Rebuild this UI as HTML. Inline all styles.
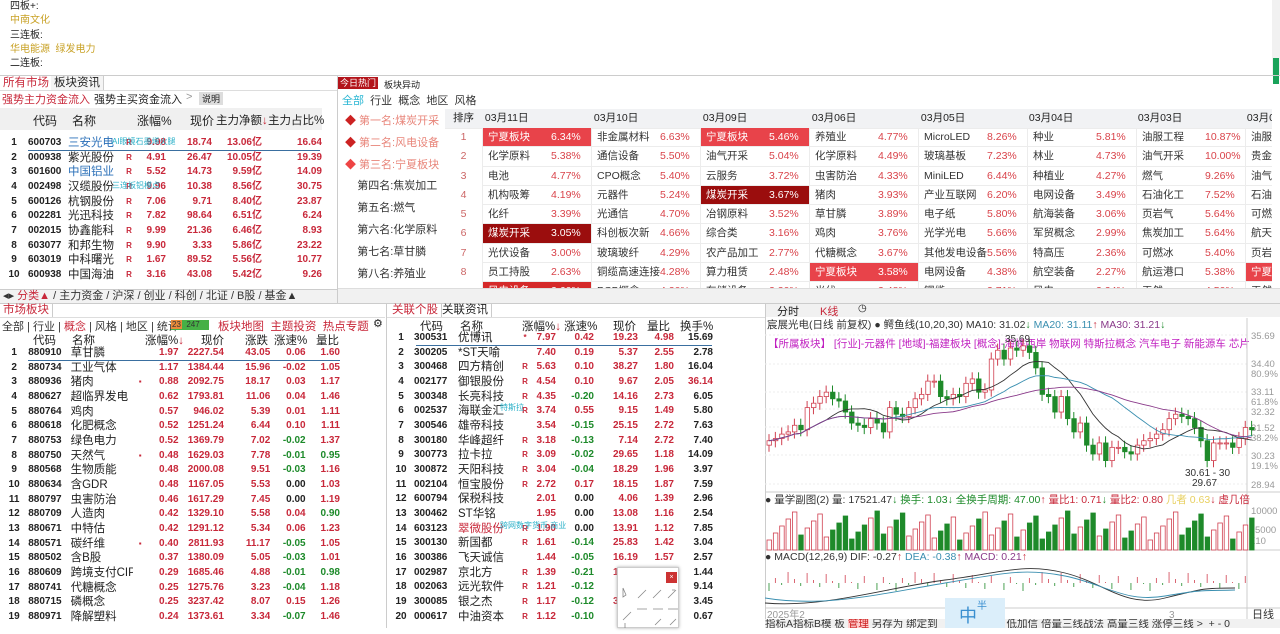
<!DOCTYPE html><html><head><meta charset="utf-8"><style>
*{margin:0;padding:0;box-sizing:border-box}
body{width:1280px;height:628px;overflow:hidden;background:#fff;font-family:"Liberation Sans","Noto Sans CJK SC",sans-serif;font-size:11px;color:#222;position:relative}
.a{position:absolute;white-space:nowrap}
.r{color:#c8283a}.g{color:#1d8a2a}.pk{color:#9a1fb0}
table{border-collapse:collapse;table-layout:fixed;position:absolute}
td{white-space:nowrap;overflow:hidden;padding:0;font-size:10px;font-weight:bold;line-height:14.67px;height:14.67px}
td.n{font-size:11.5px;font-weight:normal}
td.i{text-align:center}
td.rr{text-align:right;color:#c8283a}
.hd{position:absolute;background:#f0f0f0;font-size:11.5px;color:#333}
.tab{position:absolute;font-size:11px;border-right:1px solid #ccc;padding:0 3px;height:14px;line-height:14px}
.R{color:#c8283a;font-size:8px;font-weight:bold;text-align:center}
.ht td{font-size:10.5px;font-weight:normal;height:19.3px;line-height:19.3px;border-bottom:1px solid #ececec}
.hr{background:#e8434a}.hr,.hr b{color:#fff!important}
.dk{background:#9b0d0d}
.cl{position:relative;padding-left:5px;color:#333;border-bottom:1px solid #ececec;border-left:1px solid #ececec;overflow:hidden;white-space:nowrap}.cl b{position:absolute;left:68px;font-weight:normal;color:#d9434a}
</style></head><body>
<div class="a" style="left:10px;top:0;font-size:10px;line-height:14.3px">四板+:<br><span style="color:#c9a227">中南文化</span><br>三连板:<br><span style="color:#c9a227">华电能源&nbsp;&nbsp;绿发电力</span><br>二连板:</div>
<div class="a" style="left:1272px;top:0;width:8px;height:75px;background:#f1f1f1"></div>
<div class="a" style="left:1273px;top:58px;width:6px;height:26px;background:#1aa35a"></div>
<div class="a" style="left:0;top:75px;width:1280px;height:1px;background:#ccc"></div>
<div class="tab r" style="left:0;top:76px;font-size:11.5px">所有市场</div>
<div class="tab" style="left:51px;top:76px;font-size:11.5px;background:#f4f4f4">板块资讯</div>
<div class="a" style="left:0;top:90px;width:337px;height:1px;background:#ddd"></div>
<div class="a r" style="left:2px;top:91px;font-size:11px">强势主力资金流入</div>
<div class="a" style="left:94px;top:91px;font-size:11px">强势主买资金流入</div>
<div class="a" style="left:186px;top:91px;color:#999">&gt;</div>
<div class="a" style="left:199px;top:92px;font-size:9px;background:#ddd;padding:0 3px">说明</div>
<div class="hd" style="left:0;top:108px;width:322px;height:22px"></div>
<div class="a" style="left:33px;top:112px;font-size:12px">代码</div>
<div class="a" style="left:72px;top:112px;font-size:12px">名称</div>
<div class="a" style="left:137px;top:112px;font-size:12px">涨幅%</div>
<div class="a" style="left:190px;top:112px;font-size:12px">现价</div>
<div class="a" style="left:216px;top:112px;font-size:11.5px">主力净额<span class="r">↓</span></div>
<div class="a" style="left:268px;top:112px;font-size:11.5px">主力占比%</div>
<table style="left:0;top:136px;width:322px">
<colgroup><col width="28"><col width="40"><col width="56"><col width="10"><col width="32"><col width="46"><col width="50"><col width="60"></colgroup>
<tr><td class="i">1</td><td>600703</td><td class="n" style="color:#2a6fb8">三安光电</td><td class="R">R</td><td class="rr">9.98</td><td class="rr">18.74</td><td class="rr">13.06亿</td><td class="rr">16.64</td></tr>
<tr><td class="i">2</td><td>000938</td><td class="n">紫光股份</td><td class="R">R</td><td class="rr">4.91</td><td class="rr">26.47</td><td class="rr">10.05亿</td><td class="rr">19.39</td></tr>
<tr><td class="i">3</td><td>601600</td><td class="n" style="color:#2a6fb8">中国铝业</td><td class="R">R</td><td class="rr">5.52</td><td class="rr">14.73</td><td class="rr">9.59亿</td><td class="rr">14.09</td></tr>
<tr><td class="i">4</td><td>002498</td><td class="n">汉缆股份</td><td class="R">R</td><td class="rr">9.96</td><td class="rr">10.38</td><td class="rr">8.56亿</td><td class="rr">30.75</td></tr>
<tr><td class="i">5</td><td>600126</td><td class="n">杭钢股份</td><td class="R">R</td><td class="rr">7.06</td><td class="rr">9.71</td><td class="rr">8.40亿</td><td class="rr">23.87</td></tr>
<tr><td class="i">6</td><td>002281</td><td class="n">光迅科技</td><td class="R">R</td><td class="rr">7.82</td><td class="rr">98.64</td><td class="rr">6.51亿</td><td class="rr">6.24</td></tr>
<tr><td class="i">7</td><td>002015</td><td class="n">协鑫能科</td><td class="R">R</td><td class="rr">9.99</td><td class="rr">21.36</td><td class="rr">6.46亿</td><td class="rr">8.93</td></tr>
<tr><td class="i">8</td><td>603077</td><td class="n">和邦生物</td><td class="R">R</td><td class="rr">9.90</td><td class="rr">3.33</td><td class="rr">5.86亿</td><td class="rr">23.22</td></tr>
<tr><td class="i">9</td><td>603019</td><td class="n">中科曙光</td><td class="R">R</td><td class="rr">1.67</td><td class="rr">89.52</td><td class="rr">5.56亿</td><td class="rr">10.77</td></tr>
<tr><td class="i">10</td><td>600938</td><td class="n">中国海油</td><td class="R">R</td><td class="rr">3.16</td><td class="rr">43.08</td><td class="rr">5.42亿</td><td class="rr">9.26</td></tr>
</table>
<div class="a" style="left:112px;top:136px;font-size:8px;color:#2ab0c8">AI眼镜石墨烯火腿</div>
<div class="a" style="left:112px;top:180px;font-size:8px;color:#2ab0c8">三连板铝模点</div>
<div class="a" style="left:28px;top:150px;width:292px;height:1px;background:#3a6fa0"></div>
<div class="a" style="left:0;top:289px;width:337px;height:14px;background:#f2f2f2;border-top:1px solid #ccc;font-size:11px;line-height:13px;color:#333">&nbsp;◂▸ <span class="r">分类▲</span> / 主力资金 / 沪深 / 创业 / 科创 / 北证 / B股 / 基金▲</div>
<div class="a" style="left:337px;top:76px;width:1px;height:227px;background:#ccc"></div>
<div class="a" style="left:338px;top:77px;width:40px;height:12px;background:#b3141b;color:#fff;font-size:9px;line-height:12px;text-align:center">今日热门</div>
<div class="a" style="left:384px;top:78px;font-size:9px">板块异动</div>
<div class="a" style="left:342px;top:92px;font-size:11px;color:#333"><span style="color:#29b6d3">全部</span>&nbsp; 行业&nbsp; 概念&nbsp; 地区&nbsp; 风格</div>
<div class="a" style="left:345px;top:111px;font-size:11px;line-height:21.8px;color:#e8857a">
<span style="color:#c22">◆</span> 第一名:煤炭开采<br><span style="color:#c22">◆</span> 第二名:风电设备<br><span style="color:#e44">◆</span> 第三名:宁夏板块<br><span style="color:#333">&nbsp;&nbsp;&nbsp; 第四名:焦炭加工<br>&nbsp;&nbsp;&nbsp; 第五名:燃气<br>&nbsp;&nbsp;&nbsp; 第六名:化学原料<br>&nbsp;&nbsp;&nbsp; 第七名:草甘膦<br>&nbsp;&nbsp;&nbsp; 第八名:养殖业</span></div>
<div class="a" style="left:445px;top:109px;width:827px;height:19px;background:#f1f2f4"></div>
<table class="ht" style="left:445px;top:109px;width:827px">
<colgroup><col width="37"><col width="109"><col width="109"><col width="109"><col width="109"><col width="108"><col width="109"><col width="109"><col width="28"></colgroup>
<tr style="background:#f1f2f4"><td style="text-align:center">排序</td><td>&nbsp;03月11日</td><td>&nbsp;03月10日</td><td>&nbsp;03月09日</td><td>&nbsp;03月06日</td><td>&nbsp;03月05日</td><td>&nbsp;03月04日</td><td>&nbsp;03月03日</td><td>&nbsp;03月0</td></tr>
</table>
<div class="a" style="left:445px;top:128px;font-size:10.5px;line-height:19.3px;color:#c66;width:37px;text-align:center">1<br>2<br>3<br>4<br>5<br>6<br>7<br>8</div>
<div class="a" style="left:482px;top:128px;width:790px;height:160px;font-size:10.5px;line-height:19.3px;overflow:hidden">
<div style="display:grid;grid-template-columns:repeat(7,109px) 28px;grid-auto-rows:19.3px">
<div class="hr cl">宁夏板块<b>6.34%</b></div><div class="cl">非金属材料<b>6.63%</b></div><div class="hr cl">宁夏板块<b>5.46%</b></div><div class="cl">养殖业<b>4.77%</b></div><div class="cl">MicroLED<b>8.26%</b></div><div class="cl">种业<b>5.81%</b></div><div class="cl">油服工程<b>10.87%</b></div><div class="cl">油服</div>
<div class="cl">化学原料<b>5.38%</b></div><div class="cl">通信设备<b>5.50%</b></div><div class="cl">油气开采<b>5.04%</b></div><div class="cl">化学原料<b>4.49%</b></div><div class="cl">玻璃基板<b>7.23%</b></div><div class="cl">林业<b>4.73%</b></div><div class="cl">油气开采<b>10.00%</b></div><div class="cl">贵金</div>
<div class="cl">电池<b>4.77%</b></div><div class="cl">CPO概念<b>5.40%</b></div><div class="cl">云服务<b>3.72%</b></div><div class="cl">虫害防治<b>4.33%</b></div><div class="cl">MiniLED<b>6.44%</b></div><div class="cl">种植业<b>4.27%</b></div><div class="cl">燃气<b>9.26%</b></div><div class="cl">油气</div>
<div class="cl">机构吸筹<b>4.19%</b></div><div class="cl">元器件<b>5.24%</b></div><div class="dk hr cl">煤炭开采<b>3.67%</b></div><div class="cl">猪肉<b>3.93%</b></div><div class="cl">产业互联网<b>6.20%</b></div><div class="cl">电网设备<b>3.49%</b></div><div class="cl">石油化工<b>7.52%</b></div><div class="cl">石油</div>
<div class="cl">化纤<b>3.39%</b></div><div class="cl">光通信<b>4.70%</b></div><div class="cl">冶钢原料<b>3.52%</b></div><div class="cl">草甘膦<b>3.89%</b></div><div class="cl">电子纸<b>5.80%</b></div><div class="cl">航海装备<b>3.06%</b></div><div class="cl">页岩气<b>5.64%</b></div><div class="cl">可燃</div>
<div class="dk hr cl">煤炭开采<b>3.05%</b></div><div class="cl">科创板次新<b>4.66%</b></div><div class="cl">综合类<b>3.16%</b></div><div class="cl">鸡肉<b>3.76%</b></div><div class="cl">光学光电<b>5.66%</b></div><div class="cl">军贸概念<b>2.99%</b></div><div class="cl">焦炭加工<b>5.64%</b></div><div class="cl">航天</div>
<div class="cl">光伏设备<b>3.00%</b></div><div class="cl">玻璃玻纤<b>4.29%</b></div><div class="cl">农产品加工<b>2.77%</b></div><div class="cl">代糖概念<b>3.67%</b></div><div class="cl">其他发电设备<b>5.56%</b></div><div class="cl">特高压<b>2.36%</b></div><div class="cl">可燃冰<b>5.40%</b></div><div class="cl">页岩</div>
<div class="cl">员工持股<b>2.63%</b></div><div class="cl">铜缆高速连接<b>4.28%</b></div><div class="cl">算力租赁<b>2.48%</b></div><div class="hr cl">宁夏板块<b>3.58%</b></div><div class="cl">电网设备<b>4.38%</b></div><div class="cl">航空装备<b>2.27%</b></div><div class="cl">航运港口<b>5.38%</b></div><div class="hr cl">宁夏</div>
<div class="hr cl" style="background:#d52a2a">风电设备<b>2.60%</b></div><div class="cl">PCB概念<b>4.20%</b></div><div class="cl">存储设备<b>2.30%</b></div><div class="cl">光伏<b>3.48%</b></div><div class="cl">铜缆<b>3.71%</b></div><div class="cl">风电<b>2.24%</b></div><div class="cl">天然<b>4.50%</b></div><div class="cl">天然</div>
</div></div>
<div class="a" style="left:338px;top:288px;width:942px;height:15px;background:#f1f1f1;border-top:1px solid #ddd"></div>
<div class="a" style="left:0;top:303px;width:1280px;height:1px;background:#ccc"></div>
<div class="tab r" style="left:0;top:303px;font-size:11.5px">市场板块</div>
<div class="a" style="left:0;top:317px;width:385px;height:1px;background:#ddd"></div>
<div class="a" style="left:2px;top:318px;font-size:11px;color:#333">全部 | 行业 | <span class="r">概念</span> | 风格 | 地区 | 统计</div>
<div class="a" style="left:171px;top:320px;width:38px;height:10px;background:#46b046;font-size:8px;line-height:10px;color:#333"><span style="background:#e88a3a;padding:0 1px">23</span>&nbsp;&nbsp;247</div>
<div class="a r" style="left:218px;top:318px;font-size:11.5px">板块地图&nbsp; 主题投资&nbsp; 热点专题</div>
<div class="a" style="left:373px;top:317px;font-size:11px">⚙</div>
<div class="a" style="left:33px;top:332px;font-size:11.5px">代码</div><div class="a" style="left:72px;top:332px;font-size:11.5px">名称</div>
<div class="a" style="left:145px;top:332px;font-size:11.5px">涨幅%<span class="r">↓</span></div><div class="a" style="left:201px;top:332px;font-size:11.5px">现价</div>
<div class="a" style="left:245px;top:332px;font-size:11.5px">涨跌</div><div class="a" style="left:274px;top:332px;font-size:11.5px">涨速%</div><div class="a" style="left:316px;top:332px;font-size:11.5px">量比</div>
<table style="left:0;top:346px;width:340px">
<colgroup><col width="28"><col width="42"><col width="62"><col width="14"><col width="31"><col width="45"><col width="46"><col width="35"><col width="34"></colgroup>
<tr><td class="i">1</td><td>880910</td><td class="n">草甘膦</td><td></td><td class="rr">1.97</td><td class="rr">2227.54</td><td class="rr">43.05</td><td class="rr">0.06</td><td class="rr">1.60</td></tr>
<tr><td class="i">2</td><td>880734</td><td class="n">工业气体</td><td></td><td class="rr">1.17</td><td class="rr">1384.44</td><td class="rr">15.96</td><td class="rr g">-0.02</td><td class="rr">1.05</td></tr>
<tr><td class="i">3</td><td>880936</td><td class="n">猪肉</td><td class="R">▪</td><td class="rr">0.88</td><td class="rr">2092.75</td><td class="rr">18.17</td><td class="rr">0.03</td><td class="rr">1.17</td></tr>
<tr><td class="i">4</td><td>880627</td><td class="n">超临界发电</td><td></td><td class="rr">0.62</td><td class="rr">1793.81</td><td class="rr">11.06</td><td class="rr">0.04</td><td class="rr">1.46</td></tr>
<tr><td class="i">5</td><td>880764</td><td class="n">鸡肉</td><td></td><td class="rr">0.57</td><td class="rr">946.02</td><td class="rr">5.39</td><td class="rr">0.01</td><td class="rr">1.11</td></tr>
<tr><td class="i">6</td><td>880618</td><td class="n">化肥概念</td><td></td><td class="rr">0.52</td><td class="rr">1251.24</td><td class="rr">6.44</td><td class="rr">0.10</td><td class="rr">1.11</td></tr>
<tr><td class="i">7</td><td>880753</td><td class="n">绿色电力</td><td></td><td class="rr">0.52</td><td class="rr">1369.79</td><td class="rr">7.02</td><td class="rr" style="color:#1d8a2a">-0.02</td><td class="rr">1.37</td></tr>
<tr><td class="i">8</td><td>880750</td><td class="n">天然气</td><td class="R">▪</td><td class="rr">0.48</td><td class="rr">1629.03</td><td class="rr">7.78</td><td class="rr" style="color:#1d8a2a">-0.01</td><td class="rr" style="color:#1d8a2a">0.95</td></tr>
<tr><td class="i">9</td><td>880568</td><td class="n">生物质能</td><td></td><td class="rr">0.48</td><td class="rr">2000.08</td><td class="rr">9.51</td><td class="rr" style="color:#1d8a2a">-0.03</td><td class="rr">1.16</td></tr>
<tr><td class="i">10</td><td>880634</td><td class="n">含GDR</td><td></td><td class="rr">0.48</td><td class="rr">1167.05</td><td class="rr">5.53</td><td class="rr" style="color:#222">0.00</td><td class="rr">1.03</td></tr>
<tr><td class="i">11</td><td>880797</td><td class="n">虫害防治</td><td></td><td class="rr">0.46</td><td class="rr">1617.29</td><td class="rr">7.45</td><td class="rr" style="color:#222">0.00</td><td class="rr">1.19</td></tr>
<tr><td class="i">12</td><td>880709</td><td class="n">人造肉</td><td></td><td class="rr">0.42</td><td class="rr">1329.10</td><td class="rr">5.58</td><td class="rr">0.04</td><td class="rr" style="color:#1d8a2a">0.90</td></tr>
<tr><td class="i">13</td><td>880671</td><td class="n">中特估</td><td></td><td class="rr">0.42</td><td class="rr">1291.12</td><td class="rr">5.34</td><td class="rr">0.06</td><td class="rr">1.23</td></tr>
<tr><td class="i">14</td><td>880571</td><td class="n">碳纤维</td><td class="R">▪</td><td class="rr">0.40</td><td class="rr">2811.93</td><td class="rr">11.17</td><td class="rr" style="color:#1d8a2a">-0.05</td><td class="rr">1.05</td></tr>
<tr><td class="i">15</td><td>880502</td><td class="n">含B股</td><td></td><td class="rr">0.37</td><td class="rr">1380.09</td><td class="rr">5.05</td><td class="rr" style="color:#1d8a2a">-0.03</td><td class="rr">1.01</td></tr>
<tr><td class="i">16</td><td>880609</td><td class="n">跨境支付CIPS</td><td></td><td class="rr">0.29</td><td class="rr">1685.46</td><td class="rr">4.88</td><td class="rr" style="color:#1d8a2a">-0.01</td><td class="rr" style="color:#1d8a2a">0.98</td></tr>
<tr><td class="i">17</td><td>880741</td><td class="n">代糖概念</td><td></td><td class="rr">0.25</td><td class="rr">1275.76</td><td class="rr">3.23</td><td class="rr" style="color:#1d8a2a">-0.04</td><td class="rr">1.18</td></tr>
<tr><td class="i">18</td><td>880715</td><td class="n">磷概念</td><td></td><td class="rr">0.25</td><td class="rr">3237.42</td><td class="rr">8.07</td><td class="rr">0.15</td><td class="rr">1.26</td></tr>
<tr><td class="i">19</td><td>880971</td><td class="n">降解塑料</td><td></td><td class="rr">0.24</td><td class="rr">1373.61</td><td class="rr">3.34</td><td class="rr" style="color:#1d8a2a">-0.07</td><td class="rr">1.46</td></tr>
</table>
<div class="a" style="left:28px;top:360px;width:312px;height:1px;background:#3a6fa0"></div>
<div class="a" style="left:386px;top:303px;width:1px;height:325px;background:#ccc"></div>
<div class="tab r" style="left:389px;top:303px;font-size:11.5px">关联个股</div>
<div class="tab" style="left:439px;top:303px;font-size:11.5px">关联资讯</div>
<div class="a" style="left:387px;top:317px;width:378px;height:1px;background:#ddd"></div>
<div class="a" style="left:420px;top:318px;font-size:11.5px">代码</div><div class="a" style="left:460px;top:318px;font-size:11.5px">名称</div>
<div class="a" style="left:522px;top:318px;font-size:11.5px">涨幅%<span class="r">↓</span> 涨速%</div>
<div class="a" style="left:613px;top:318px;font-size:11.5px">现价</div><div class="a" style="left:647px;top:318px;font-size:11.5px">量比</div><div class="a" style="left:680px;top:318px;font-size:11.5px">换手%</div>
<table style="left:388px;top:331px;width:325px">
<colgroup><col width="26"><col width="44"><col width="60"><col width="14"><col width="24"><col width="38"><col width="44"><col width="36"><col width="39"></colgroup>
<tr><td class="i">1</td><td>300531</td><td class="n">优博讯</td><td class="R">*</td><td class="rr">7.97</td><td class="rr">0.42</td><td class="rr">19.23</td><td class="rr pk">4.98</td><td class="rr" style="color:#222">15.69</td></tr>
<tr><td class="i">2</td><td>300205</td><td class="n">*ST天喻</td><td></td><td class="rr">7.40</td><td class="rr">0.19</td><td class="rr">5.37</td><td class="rr">2.55</td><td class="rr" style="color:#222">2.78</td></tr>
<tr><td class="i">3</td><td>300468</td><td class="n">四方精创</td><td class="R">R</td><td class="rr">5.63</td><td class="rr">0.10</td><td class="rr">38.27</td><td class="rr">1.80</td><td class="rr" style="color:#222">16.04</td></tr>
<tr><td class="i">4</td><td>002177</td><td class="n">御银股份</td><td class="R">R</td><td class="rr">4.54</td><td class="rr">0.10</td><td class="rr">9.67</td><td class="rr">2.05</td><td class="rr pk">36.14</td></tr>
<tr><td class="i">5</td><td>300348</td><td class="n">长亮科技</td><td class="R">R</td><td class="rr">4.35</td><td class="rr" style="color:#1d8a2a">-0.20</td><td class="rr">14.16</td><td class="rr">2.73</td><td class="rr" style="color:#222">6.05</td></tr>
<tr><td class="i">6</td><td>002537</td><td class="n">海联金汇</td><td class="R">R</td><td class="rr">3.74</td><td class="rr">0.55</td><td class="rr">9.15</td><td class="rr">1.49</td><td class="rr" style="color:#222">5.80</td></tr>
<tr><td class="i">7</td><td>300546</td><td class="n">雄帝科技</td><td></td><td class="rr">3.54</td><td class="rr" style="color:#1d8a2a">-0.15</td><td class="rr">25.15</td><td class="rr">2.72</td><td class="rr" style="color:#222">7.63</td></tr>
<tr><td class="i">8</td><td>300180</td><td class="n">华峰超纤</td><td class="R">R</td><td class="rr">3.18</td><td class="rr" style="color:#1d8a2a">-0.13</td><td class="rr">7.14</td><td class="rr">2.72</td><td class="rr" style="color:#222">7.40</td></tr>
<tr><td class="i">9</td><td>300773</td><td class="n">拉卡拉</td><td class="R">R</td><td class="rr">3.09</td><td class="rr" style="color:#1d8a2a">-0.02</td><td class="rr">29.65</td><td class="rr">1.18</td><td class="rr" style="color:#222">14.09</td></tr>
<tr><td class="i">10</td><td>300872</td><td class="n">天阳科技</td><td class="R">R</td><td class="rr">3.04</td><td class="rr" style="color:#1d8a2a">-0.04</td><td class="rr">18.29</td><td class="rr">1.96</td><td class="rr" style="color:#222">3.97</td></tr>
<tr><td class="i">11</td><td>002104</td><td class="n">恒宝股份</td><td class="R">R</td><td class="rr">2.72</td><td class="rr">0.17</td><td class="rr">18.15</td><td class="rr">1.87</td><td class="rr" style="color:#222">7.59</td></tr>
<tr><td class="i">12</td><td>600794</td><td class="n">保税科技</td><td></td><td class="rr">2.01</td><td class="rr" style="color:#222">0.00</td><td class="rr">4.06</td><td class="rr">1.39</td><td class="rr" style="color:#222">2.96</td></tr>
<tr><td class="i">13</td><td>300462</td><td class="n">ST华铭</td><td></td><td class="rr">1.95</td><td class="rr" style="color:#222">0.00</td><td class="rr">13.08</td><td class="rr">1.16</td><td class="rr" style="color:#222">2.54</td></tr>
<tr><td class="i">14</td><td>603123</td><td class="n" style="color:#c8283a">翠微股份</td><td class="R">R</td><td class="rr">1.90</td><td class="rr" style="color:#222">0.00</td><td class="rr">13.91</td><td class="rr">1.12</td><td class="rr" style="color:#222">7.85</td></tr>
<tr><td class="i">15</td><td>300130</td><td class="n">新国都</td><td class="R">R</td><td class="rr">1.61</td><td class="rr" style="color:#1d8a2a">-0.14</td><td class="rr">25.83</td><td class="rr">1.42</td><td class="rr" style="color:#222">3.04</td></tr>
<tr><td class="i">16</td><td>300386</td><td class="n">飞天诚信</td><td></td><td class="rr">1.44</td><td class="rr" style="color:#1d8a2a">-0.05</td><td class="rr">16.19</td><td class="rr">1.57</td><td class="rr" style="color:#222">2.57</td></tr>
<tr><td class="i">17</td><td>002987</td><td class="n">京北方</td><td class="R">R</td><td class="rr">1.39</td><td class="rr" style="color:#1d8a2a">-0.21</td><td class="rr">18.90</td><td class="rr">1.30</td><td class="rr" style="color:#222">1.44</td></tr>
<tr><td class="i">18</td><td>002063</td><td class="n">远光软件</td><td class="R">R</td><td class="rr">1.21</td><td class="rr" style="color:#1d8a2a">-0.12</td><td class="rr">7.80</td><td class="rr">1.20</td><td class="rr" style="color:#222">9.14</td></tr>
<tr><td class="i">19</td><td>300085</td><td class="n">银之杰</td><td class="R">R</td><td class="rr">1.17</td><td class="rr" style="color:#1d8a2a">-0.12</td><td class="rr">35.10</td><td class="rr">1.10</td><td class="rr" style="color:#222">3.45</td></tr>
<tr><td class="i">20</td><td>000617</td><td class="n">中油资本</td><td class="R">R</td><td class="rr">1.12</td><td class="rr" style="color:#1d8a2a">-0.10</td><td class="rr">9.80</td><td class="rr">1.05</td><td class="rr" style="color:#222">0.67</td></tr>
</table>
<div class="a" style="left:500px;top:402px;font-size:8px;color:#2ab0c8">特斯拉</div>
<div class="a" style="left:500px;top:520px;font-size:8px;color:#2ab0c8">跨网数字货币 商业</div>
<div class="a" style="left:416px;top:345px;width:296px;height:1px;background:#3a6fa0"></div>
<div class="a" style="left:617px;top:567px;width:62px;height:61px;background:#fff;border:1px solid #ccc;box-shadow:0 0 3px #aaa"></div>
<div class="a" style="left:666px;top:572px;width:11px;height:11px;background:#c33;color:#fff;font-size:7px;text-align:center;line-height:11px">×</div>
<svg class="a" style="left:620px;top:585px" width="58" height="43" stroke="#888" fill="none" stroke-width="0.8"><path d="M3 3l0 9 3-2zM18 13l8-8M33 13l8-8M48 13l8-8M55 5l-3 0M3 35l8-8M17 24h10M33 24h10M48 24h10M5 38v5M35 40l6-6M50 40l6-6"/></svg>
<div class="a" style="left:765px;top:303px;width:1px;height:325px;background:#ccc"></div>
<div class="a" style="left:766px;top:304px;width:514px;height:13px;background:#f1f1f1"></div>
<div class="a" style="left:777px;top:303px;font-size:11px">分时</div>
<div class="a r" style="left:820px;top:303px;font-size:11px">K线</div>
<div class="a" style="left:858px;top:303px;font-size:10px">◷</div>
<div class="a" style="left:767px;top:317px;font-size:10.5px;color:#333">宸展光电(日线 前复权) ● 鳄鱼线(10,20,30) MA10: 31.02<span class="g">↓</span> <span style="color:#3a8fb0">MA20: 31.11</span><span class="r">↑</span> <span style="color:#8a3a8a">MA30: 31.21</span><span class="g">↓</span></div>
<div class="a" style="left:768px;top:336px;font-size:10.5px;color:#c020c0">【所属板块】 [行业]-元器件 [地域]-福建板块 [概念]-海峡西岸 物联网 特斯拉概念 汽车电子 新能源车 芯片</div>
<svg class="a" style="left:765px;top:318px" width="515" height="310">
<g stroke="#eee" stroke-dasharray="2,2"><line x1="0" y1="17" x2="482" y2="17"/><line x1="0" y1="46" x2="482" y2="46"/><line x1="0" y1="74" x2="482" y2="74"/><line x1="0" y1="91" x2="482" y2="91"/><line x1="0" y1="109" x2="482" y2="109"/><line x1="0" y1="137" x2="482" y2="137"/><line x1="0" y1="166" x2="482" y2="166"/></g>
<line x1="482" y1="0" x2="482" y2="310" stroke="#ccc"/>
<line x1="0" y1="174" x2="515" y2="174" stroke="#ccc"/>
<line x1="0" y1="232" x2="515" y2="232" stroke="#ccc"/>
<line x1="0" y1="290" x2="515" y2="290" stroke="#ccc"/>
<g font-size="9.5" fill="#999" font-family="Liberation Sans"><text x="486" y="21">35.69</text><text x="486" y="49">34.40</text><text x="486" y="59">80.9%</text><text x="486" y="77">33.11</text><text x="486" y="87">61.8%</text><text x="486" y="97">32.32</text><text x="486" y="113">31.52</text><text x="486" y="123">38.2%</text><text x="486" y="141">30.23</text><text x="486" y="151">19.1%</text><text x="486" y="170">28.94</text><text x="486" y="196">10000</text><text x="490" y="215">5000</text><text x="484" y="226">X10</text></g>
<text x="0" y="185" font-size="10.5" fill="#333" font-family="Liberation Sans,Noto Sans CJK SC">● 量学副图(2) 量: 17521.47<tspan fill="#1d8a2a">↓ 换手: 1.03↓ 全换手周期: 47.00</tspan><tspan fill="#c8283a">↑ 量比1: 0.71</tspan><tspan fill="#1d8a2a">↓</tspan><tspan fill="#c8283a"> 量比2: 0.80</tspan><tspan fill="#e8d060"> 几者 0.63</tspan><tspan fill="#c8283a">↓ 虚几倍</tspan></text>
<text x="0" y="242" font-size="10.5" fill="#333" font-family="Liberation Sans">● MACD(12,26,9) DIF: -0.27<tspan fill="#c8283a">↑</tspan> <tspan fill="#3a8fb0">DEA: -0.38</tspan><tspan fill="#c8283a">↑</tspan> <tspan fill="#8a3a8a">MACD: 0.21</tspan><tspan fill="#c8283a">↑</tspan></text>
<text x="2" y="300" font-size="10" fill="#999" font-family="Liberation Sans">2025年2</text><text x="180" y="300" font-size="10" fill="#999">2</text><text x="404" y="300" font-size="10" fill="#999">3</text>
<text x="420" y="158" font-size="10" fill="#333" font-family="Liberation Sans">30.61 - 30</text>
<text x="427" y="168" font-size="10" fill="#333" font-family="Liberation Sans">29.67</text>
<text x="240" y="24" font-size="10" fill="#333" font-family="Liberation Sans">35.69</text>
<text x="487" y="300" font-size="11" fill="#333" font-family="Liberation Sans,Noto Sans CJK SC">日线</text>
<g id="cg"></g>
</svg>
<div class="a" style="left:765px;top:619px;width:515px;height:9px;background:#f1f1f1;font-size:10.5px;line-height:10px;color:#333;overflow:hidden">指标A指标B模 板 <span style="background:#fcc;color:#c22">管理</span> 另存为 绑定到 &nbsp;&nbsp;&nbsp;&nbsp;&nbsp;&nbsp;&nbsp;&nbsp;&nbsp;&nbsp;&nbsp;&nbsp;&nbsp;&nbsp;&nbsp;&nbsp;&nbsp; 盘 低加信 倍量三线战法 高量三线 涨停三线 &gt; &nbsp;+ - 0</div>
<div class="a" style="left:945px;top:598px;width:60px;height:30px;background:#dbeefa;color:#3a8fd0;font-size:18px;line-height:36px;padding-left:14px">中<span style="font-size:10px;vertical-align:top;line-height:18px">半</span></div>
<script>
var c=[30.9,31.0,31.2,31.3,31.6,31.4,32.4,32.6,32.9,33.1,32.8,32.7,32.2,31.7,31.6,31.5,31.9,31.7,31.3,32.4,32.1,32.0,32.4,32.8,33.0,33.6,33.6,32.9,32.8,33.0,32.9,33.5,33.7,33.1,33.2,34.6,35.0,34.6,35.1,35.0,35.2,34.9,34.2,33.0,32.9,32.2,32.9,31.9,31.3,31.7,30.7,30.3,30.8,30.0,30.6,30.6,30.4,30.3,30.7,30.9,31.0,31.2,31.4,31.9,32.1,32.0,31.9,31.5,30.9,30.0,30.8,30.8,30.8,30.6,31.0,31.5,31.4];
var g=document.getElementById('cg'),s='',n=c.length;
function y(p){return 17+(35.69-p)/(35.69-28.94)*149;}
var ma=function(k){var r=[];for(var i=0;i<n;i++){var a=0,m=0;for(var j=Math.max(0,i-k+1);j<=i;j++){a+=c[j];m++}r.push(a/m)}return r};
var step=6.35;
for(var i=0;i<n;i++){var x=2+i*step,o=i?c[i-1]:c[0]-0.2,cl=c[i],up=cl>=o,h=Math.max(o,cl)+0.3,l=Math.min(o,cl)-0.3,col=up?'#d04050':'#1e8a2a';
s+='<line x1="'+(x+2)+'" y1="'+y(h)+'" x2="'+(x+2)+'" y2="'+y(l)+'" stroke="'+col+'"/>';
var t=y(Math.max(o,cl)),b=y(Math.min(o,cl));s+='<rect x="'+x+'" y="'+t+'" width="4.5" height="'+Math.max(1,b-t)+'" fill="'+(up?'#fff':col)+'" stroke="'+col+'" stroke-width="0.8"/>';
var v=10+((i*37)%30);s+='<rect x="'+x+'" y="'+(232-v)+'" width="4.5" height="'+v+'" fill="'+(up?'#fff':col)+'" stroke="'+col+'" stroke-width="0.8"/>';
var hv=((i*13)%20)-8;s+='<line x1="'+(x+2)+'" y1="265" x2="'+(x+2)+'" y2="'+(265-hv)+'" stroke="'+(hv>0?'#d04050':'#1e8a2a')+'" stroke-width="0.8"/>';}
[[10,'#333'],[20,'#3a8fb0'],[30,'#8a3a8a']].forEach(function(q){var m=ma(q[0]),p='';for(var i=0;i<n;i++)p+=(i?'L':'M')+(4+i*step)+' '+y(m[i]);s+='<path d="'+p+'" stroke="'+q[1]+'" fill="none" stroke-width="0.9"/>';});
s+='<path d="M0 285 C60 290 120 270 180 262 S 260 245 300 255 S 360 290 400 280 S 440 270 470 270" stroke="#333" fill="none" stroke-width="0.9"/><path d="M0 280 C60 290 120 275 180 265 S 260 250 300 258 S 360 285 400 278 S 440 273 470 272" stroke="#3a8fb0" fill="none" stroke-width="0.9"/>';
g.innerHTML=s;
</script>
</body></html>
